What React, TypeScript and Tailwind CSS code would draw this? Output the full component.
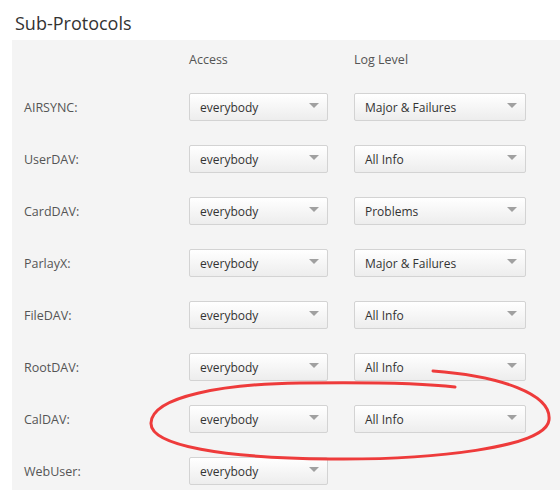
import React from "react";

const rows: { label: string; access: string; log?: string }[] = [
  { label: "AIRSYNC:", access: "everybody", log: "Major & Failures" },
  { label: "UserDAV:", access: "everybody", log: "All Info" },
  { label: "CardDAV:", access: "everybody", log: "Problems" },
  { label: "ParlayX:", access: "everybody", log: "Major & Failures" },
  { label: "FileDAV:", access: "everybody", log: "All Info" },
  { label: "RootDAV:", access: "everybody", log: "All Info" },
  { label: "CalDAV:", access: "everybody", log: "All Info" },
  { label: "WebUser:", access: "everybody" },
];

function Select({ value, className }: { value: string; className: string }) {
  return (
    <div
      className={
        "h-[28px] flex items-center justify-between border border-[#d3d3d3] rounded-[2px] bg-gradient-to-b from-[#ffffff] to-[#ededed] pl-[10px] pr-[8px] text-[12px] text-[#333333] " +
        className
      }
    >
      <span className="pt-[2px]">{value}</span>
      <svg width="10" height="6" viewBox="0 0 10 6" className="mb-[2px]">
        <path d="M0 0 L10 0 L5 5 Z" fill="#a0a0a0" />
      </svg>
    </div>
  );
}

export default function App() {
  return (
    <div
      className="relative w-[560px] h-[490px] bg-white overflow-hidden"
      style={{ fontFamily: '"Open Sans", "Liberation Sans", sans-serif' }}
    >
      <div className="h-[40px] pl-[15px] pt-[11px] text-[18px] leading-[24px] text-[#333333]">
        Sub-Protocols
      </div>
      <div className="ml-[12px] bg-[#f4f4f4] pt-[12px] h-[460px]">
        <div className="flex flex-col gap-[24px]">
          <div className="flex h-[17px] items-center text-[12.5px] text-[#555555]">
            <div className="w-[177px]" />
            <div className="w-[165px]">Access</div>
            <div>Log Level</div>
          </div>
          {rows.map((r) => (
            <div key={r.label} className="flex h-[28px] items-center">
              <div className="w-[177px] pl-[12px] pt-[2px] text-[12.5px] text-[#555555]">{r.label}</div>
              <Select value={r.access} className="w-[139px]" />
              {r.log ? <Select value={r.log} className="w-[172px] ml-[26px]" /> : null}
            </div>
          ))}
        </div>
      </div>
      <svg
        className="absolute left-0 top-0 pointer-events-none"
        width="560"
        height="490"
        viewBox="0 0 560 490"
      >
        <path
          d="M433 371 C 500 376 552 394 549 420 C 546 448 430 460 330 459 C 225 458 150 446 151 423 C 152 396 225 384 300 383 C 375 382 430 384 455 387"
          fill="none"
          stroke="#ee3b3b"
          strokeWidth="3"
          strokeLinecap="round"
        />
      </svg>
    </div>
  );
}
